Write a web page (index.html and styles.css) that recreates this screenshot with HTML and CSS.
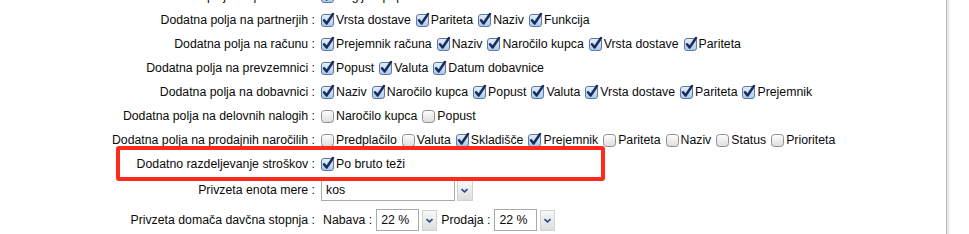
FILE: index.html
```html
<!DOCTYPE html>
<html lang="sl">
<head>
<meta charset="utf-8">
<title>Nastavitve</title>
<link rel="stylesheet" href="styles.css">
</head>
<body>
<svg class="defs" width="0" height="0" aria-hidden="true">
  <defs>
    <linearGradient id="gOn" x1="0" y1="0" x2="0" y2="1">
      <stop offset="0" stop-color="#e6f0fb"/>
      <stop offset="1" stop-color="#a9c9ec"/>
    </linearGradient>
    <linearGradient id="gOff" x1="0" y1="0" x2="0" y2="1">
      <stop offset="0" stop-color="#ffffff"/>
      <stop offset="1" stop-color="#dcdcdc"/>
    </linearGradient>
    <symbol id="cbOn" viewBox="0 0 14 14" overflow="visible">
      <rect x="0.5" y="1.5" width="12" height="12" rx="2.5" fill="url(#gOn)" stroke="#5c7aa3"/>
      <path d="M3 7.2 L5.6 10.5 L12 1" fill="none" stroke="#1b2d5c" stroke-width="2.5" stroke-linecap="round" stroke-linejoin="round"/>
    </symbol>
    <symbol id="cbOff" viewBox="0 0 14 14">
      <rect x="0.5" y="1.5" width="12" height="12" rx="3" fill="url(#gOff)" stroke="#8e8e8e"/>
    </symbol>
    <symbol id="chev" viewBox="0 0 14 22">
      <path d="M3.5 9.5 L7 12.5 L10.5 9.5" fill="none" stroke="#2b4a86" stroke-width="2"/>
    </symbol>
  </defs>
</svg>

<div class="page">
  <div class="form">
    <div class="row">
      <div class="lbl">Dodatna polja na ponudbah :</div>
      <div class="opts">
        <span class="opt"><svg class="cb"><use href="#cbOn"/></svg>Regijski popust</span>
      </div>
    </div>
    <div class="row">
      <div class="lbl">Dodatna polja na partnerjih :</div>
      <div class="opts">
        <span class="opt"><svg class="cb"><use href="#cbOn"/></svg>Vrsta dostave</span>
        <span class="opt"><svg class="cb"><use href="#cbOn"/></svg>Pariteta</span>
        <span class="opt"><svg class="cb"><use href="#cbOn"/></svg>Naziv</span>
        <span class="opt"><svg class="cb"><use href="#cbOn"/></svg>Funkcija</span>
      </div>
    </div>
    <div class="row">
      <div class="lbl">Dodatna polja na računu :</div>
      <div class="opts">
        <span class="opt"><svg class="cb"><use href="#cbOn"/></svg>Prejemnik računa</span>
        <span class="opt"><svg class="cb"><use href="#cbOn"/></svg>Naziv</span>
        <span class="opt"><svg class="cb"><use href="#cbOn"/></svg>Naročilo kupca</span>
        <span class="opt"><svg class="cb"><use href="#cbOn"/></svg>Vrsta dostave</span>
        <span class="opt"><svg class="cb"><use href="#cbOn"/></svg>Pariteta</span>
      </div>
    </div>
    <div class="row">
      <div class="lbl">Dodatna polja na prevzemnici :</div>
      <div class="opts">
        <span class="opt"><svg class="cb"><use href="#cbOn"/></svg>Popust</span>
        <span class="opt"><svg class="cb"><use href="#cbOn"/></svg>Valuta</span>
        <span class="opt"><svg class="cb"><use href="#cbOn"/></svg>Datum dobavnice</span>
      </div>
    </div>
    <div class="row">
      <div class="lbl">Dodatna polja na dobavnici :</div>
      <div class="opts">
        <span class="opt"><svg class="cb"><use href="#cbOn"/></svg>Naziv</span>
        <span class="opt"><svg class="cb"><use href="#cbOn"/></svg>Naročilo kupca</span>
        <span class="opt"><svg class="cb"><use href="#cbOn"/></svg>Popust</span>
        <span class="opt"><svg class="cb"><use href="#cbOn"/></svg>Valuta</span>
        <span class="opt"><svg class="cb"><use href="#cbOn"/></svg>Vrsta dostave</span>
        <span class="opt"><svg class="cb"><use href="#cbOn"/></svg>Pariteta</span>
        <span class="opt"><svg class="cb"><use href="#cbOn"/></svg>Prejemnik</span>
      </div>
    </div>
    <div class="row">
      <div class="lbl">Dodatna polja na delovnih nalogih :</div>
      <div class="opts">
        <span class="opt"><svg class="cb"><use href="#cbOff"/></svg>Naročilo kupca</span>
        <span class="opt"><svg class="cb"><use href="#cbOff"/></svg>Popust</span>
      </div>
    </div>
    <div class="row">
      <div class="lbl">Dodatna polja na prodajnih naročilih :</div>
      <div class="opts">
        <span class="opt"><svg class="cb"><use href="#cbOff"/></svg>Predplačilo</span>
        <span class="opt"><svg class="cb"><use href="#cbOff"/></svg>Valuta</span>
        <span class="opt"><svg class="cb"><use href="#cbOn"/></svg>Skladišče</span>
        <span class="opt"><svg class="cb"><use href="#cbOn"/></svg>Prejemnik</span>
        <span class="opt"><svg class="cb"><use href="#cbOff"/></svg>Pariteta</span>
        <span class="opt"><svg class="cb"><use href="#cbOff"/></svg>Naziv</span>
        <span class="opt"><svg class="cb"><use href="#cbOff"/></svg>Status</span>
        <span class="opt"><svg class="cb"><use href="#cbOff"/></svg>Prioriteta</span>
      </div>
    </div>
    <div class="row">
      <div class="lbl">Dodatno razdeljevanje stroškov :</div>
      <div class="opts">
        <span class="opt"><svg class="cb"><use href="#cbOn"/></svg>Po bruto teži</span>
      </div>
    </div>
    <div class="row row-sel">
      <div class="lbl">Privzeta enota mere :</div>
      <div class="opts">
        <span class="field field-wide">kos</span>
        <span class="btn btn-wide"><svg class="chev"><use href="#chev"/></svg></span>
      </div>
    </div>
    <div class="row row-sel row-last">
      <div class="lbl">Privzeta domača davčna stopnja :</div>
      <div class="opts opts-tax">
        <span class="tax-lbl">Nabava :</span>
        <span class="field field-small">22 %</span>
        <span class="btn"><svg class="chev"><use href="#chev"/></svg></span>
        <span class="tax-lbl">Prodaja :</span>
        <span class="field field-small">22 %</span>
        <span class="btn"><svg class="chev"><use href="#chev"/></svg></span>
      </div>
    </div>
  </div>
  <div class="highlight"></div>
</div>
</body>
</html>
```

FILE: styles.css
```css
html, body {
  margin: 0;
  padding: 0;
  background: #ffffff;
  overflow: hidden;
}

body {
  font-family: "Liberation Sans", Arial, sans-serif;
  font-size: 12.3px;
  color: #0a0a0a;
}

.defs {
  position: absolute;
  width: 0;
  height: 0;
}

.page {
  position: relative;
  width: 946px;
  height: 300px;
  margin-top: -16px;
  border-right: 1px solid #aec3ac;
  box-shadow: 2px 0 2px #e2e2e2;
  background: #fff;
}

.form {
  display: flex;
  flex-direction: column;
}

.row {
  display: flex;
  align-items: center;
  height: 24px;
}

.lbl {
  width: 315px;
  flex: none;
  text-align: right;
  white-space: nowrap;
}

.opts {
  display: flex;
  align-items: center;
  padding-left: 6px;
  white-space: nowrap;
}

.opt {
  display: inline-flex;
  align-items: center;
  margin-right: 5px;
}

.cb {
  width: 14px;
  height: 14px;
  margin-right: 1px;
  overflow: visible;
  flex: none;
}

.row-sel {
  height: 28px;
}

.row-last {
  height: 30px;
  margin-top: 1px;
}

.field {
  display: inline-flex;
  align-items: center;
  box-sizing: border-box;
  height: 22px;
  border: 1px solid #a9a9a9;
  background: #fff;
  padding-left: 4px;
}

.field-wide {
  width: 134px;
}

.field-small {
  width: 43px;
}

.btn {
  display: inline-block;
  box-sizing: border-box;
  width: 15px;
  height: 21px;
  margin-left: 3px;
  border: 1px solid #c9d9c9;
  background: linear-gradient(#f7f7f7, #dedede);
}

.btn-wide {
  width: 16px;
  margin-left: 2px;
}

.chev {
  display: block;
  width: 13px;
  height: 19px;
}

.opts-tax {
  padding-left: 8px;
}

.tax-lbl {
  margin-right: 4px;
}

.btn + .tax-lbl {
  margin-left: 4px;
}

.highlight {
  position: absolute;
  left: 116px;
  top: 162px;
  width: 489px;
  height: 35px;
  box-sizing: border-box;
  border: 4px solid #ff2a1b;
  border-radius: 3px;
}
```
